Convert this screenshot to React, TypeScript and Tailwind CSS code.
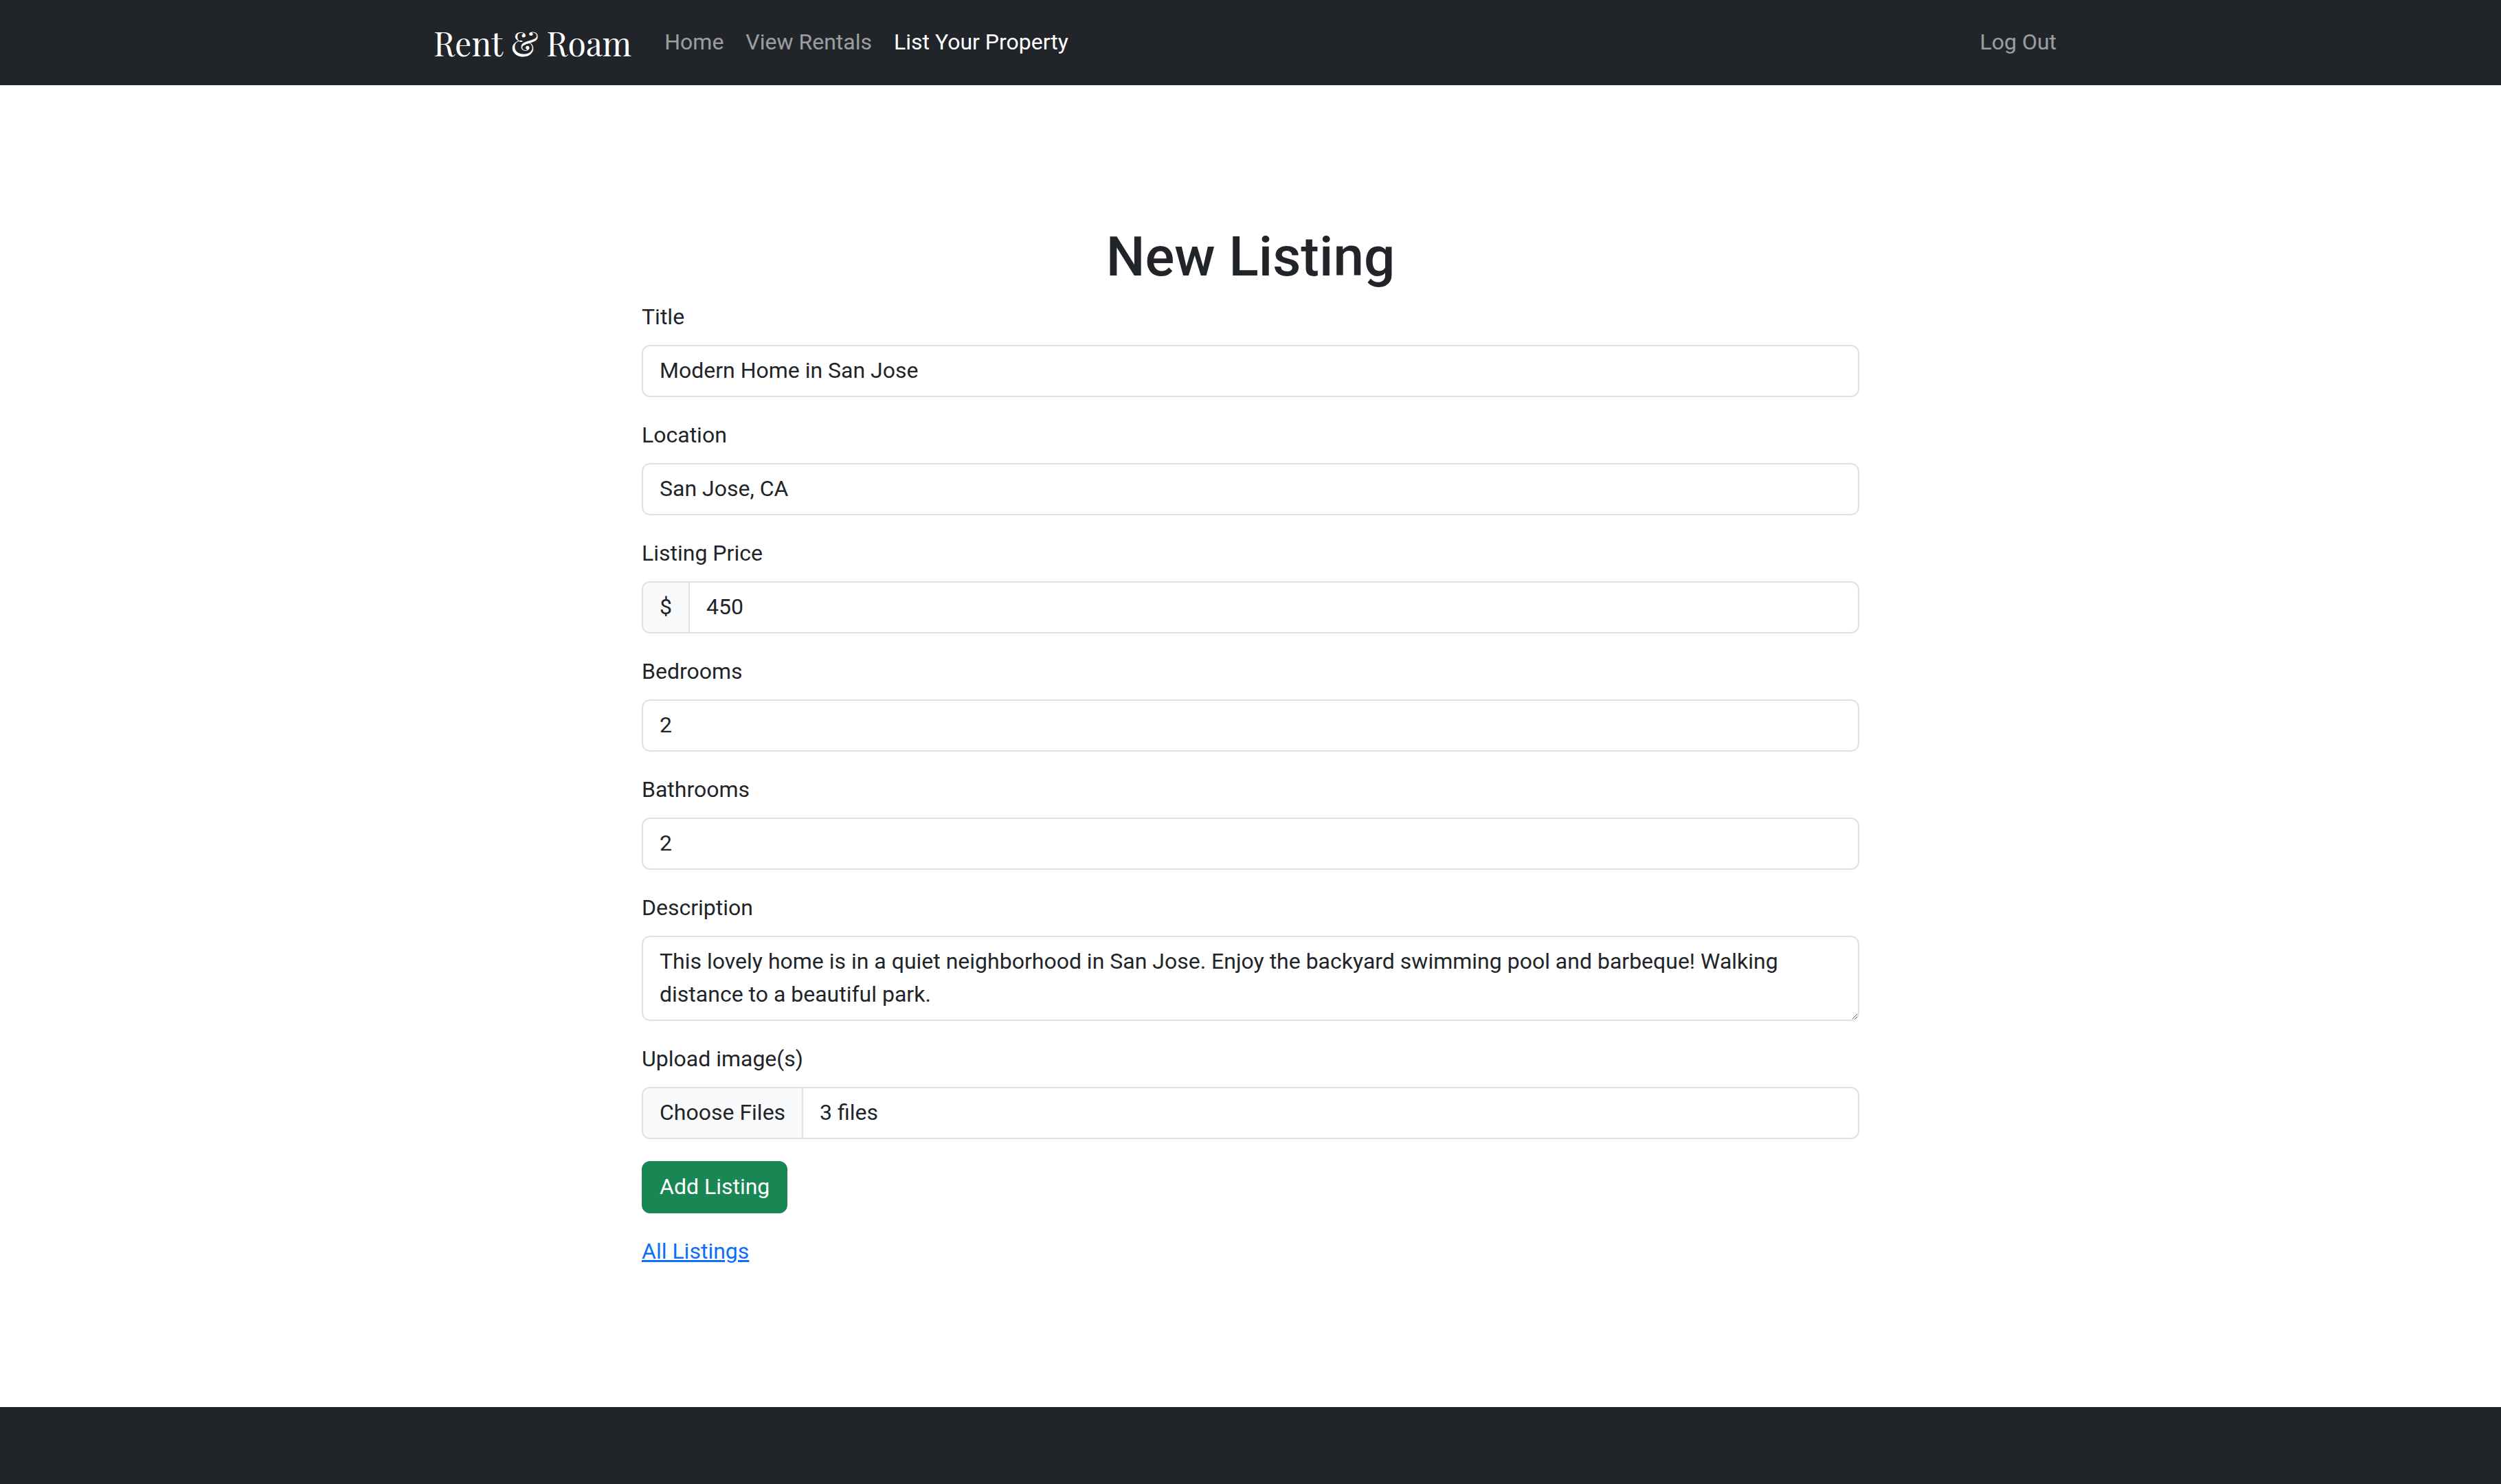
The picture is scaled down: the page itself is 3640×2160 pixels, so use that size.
import { useEffect, useRef } from "react";
import type { ReactNode } from "react";

const control =
  "block w-full rounded-xl border-2 border-[#dee2e6] bg-white px-6 pt-[11px] pb-[13px] text-[32px] leading-[48px] text-[#212529] outline-none focus:border-[#86b7fe]";

const navLinks = [
  { label: "Home", active: false },
  { label: "View Rentals", active: false },
  { label: "List Your Property", active: true },
];

function NavLink({ label, active = false }: { label: string; active?: boolean }) {
  return (
    <a href="#" aria-current={active ? "page" : undefined} className={active ? "px-4 pb-[2px] text-white" : "px-4 pb-[2px] text-white/55 hover:text-white/75"}>
      {label}
    </a>
  );
}

function Field({ id, label, children }: { id: string; label: string; children: ReactNode }) {
  return (
    <div className="flex flex-col gap-[18px]">
      <label htmlFor={id} className="self-start leading-[46px]">
        {label}
      </label>
      {children}
    </div>
  );
}

function ImageUpload({ id }: { id: string }) {
  const ref = useRef<HTMLInputElement>(null);

  useEffect(() => {
    const transfer = new DataTransfer();
    ["front.jpg", "kitchen.jpg", "pool.jpg"].forEach((name) =>
      transfer.items.add(new File([""], name, { type: "image/jpeg" })),
    );
    if (ref.current) ref.current.files = transfer.files;
  }, []);

  return (
    <input
      ref={ref}
      id={id}
      name="images"
      type="file"
      multiple
      className="block w-full overflow-hidden rounded-xl border-2 border-[#dee2e6] bg-white text-[32px] leading-[48px] text-[#212529] file:mr-6 file:rounded-none file:border-0 file:border-r-2 file:border-solid file:border-[#dee2e6] file:bg-[#f8f9fa] file:px-6 file:pt-[11px] file:pb-[13px] file:text-[#212529]"
    />
  );
}

export default function App() {
  return (
    <div className="flex min-h-screen flex-col bg-white font-['Roboto',sans-serif] text-[32px] leading-[48px] text-[#212529]">
      <header className="bg-[#212529]">
        <nav className="mx-auto flex h-[124px] w-full max-w-[2426px] items-center px-6">
          <a href="#" className="mr-8 font-['Playfair_Display','Liberation_Serif',serif] text-[48px] leading-[72px] whitespace-nowrap text-white">
            Rent &amp; Roam
          </a>
          <div className="flex flex-1 items-center">
            {navLinks.map((link) => (
              <NavLink key={link.label} label={link.label} active={link.active} />
            ))}
          </div>
          <NavLink label="Log Out" />
        </nav>
      </header>

      <main className="mx-auto flex w-full max-w-[1820px] flex-1 flex-col justify-center px-6">
        <h1 className="mb-4 text-center text-[80px] leading-[96px] font-medium">New Listing</h1>
        <form className="flex flex-col gap-8" onSubmit={(e) => e.preventDefault()}>
          <Field id="title" label="Title">
            <input id="title" name="title" type="text" defaultValue="Modern Home in San Jose" className={control} />
          </Field>
          <Field id="location" label="Location">
            <input id="location" name="location" type="text" defaultValue="San Jose, CA" className={control} />
          </Field>
          <Field id="price" label="Listing Price">
            <div className="flex overflow-hidden rounded-xl border-2 border-[#dee2e6] bg-white">
              <span className="border-r-2 border-[#dee2e6] bg-[#f8f9fa] px-6 pt-[11px] pb-[13px]">$</span>
              <input id="price" name="price" type="text" inputMode="decimal" defaultValue="450" className="min-w-0 flex-1 px-6 pt-[11px] pb-[13px] outline-none" />
            </div>
          </Field>
          <Field id="bedrooms" label="Bedrooms">
            <input id="bedrooms" name="bedrooms" type="number" defaultValue="2" className={control} />
          </Field>
          <Field id="bathrooms" label="Bathrooms">
            <input id="bathrooms" name="bathrooms" type="number" defaultValue="2" className={control} />
          </Field>
          <Field id="description" label="Description">
            <textarea
              id="description"
              name="description"
              rows={2}
              defaultValue="This lovely home is in a quiet neighborhood in San Jose. Enjoy the backyard swimming pool and barbeque! Walking distance to a beautiful park."
              className={control}
            />
          </Field>
          <Field id="images" label="Upload image(s)">
            <ImageUpload id="images" />
          </Field>
          <button type="submit" className="self-start rounded-xl border-2 border-[#198754] bg-[#198754] px-6 pt-[11px] pb-[13px] text-white hover:bg-[#157347]">
            Add Listing
          </button>
          <a href="#" className="self-start pb-[2px] leading-[46px] text-[#0d6efd] underline">
            All Listings
          </a>
        </form>
      </main>

      <footer className="h-28 bg-[#212529]" />
    </div>
  );
}
